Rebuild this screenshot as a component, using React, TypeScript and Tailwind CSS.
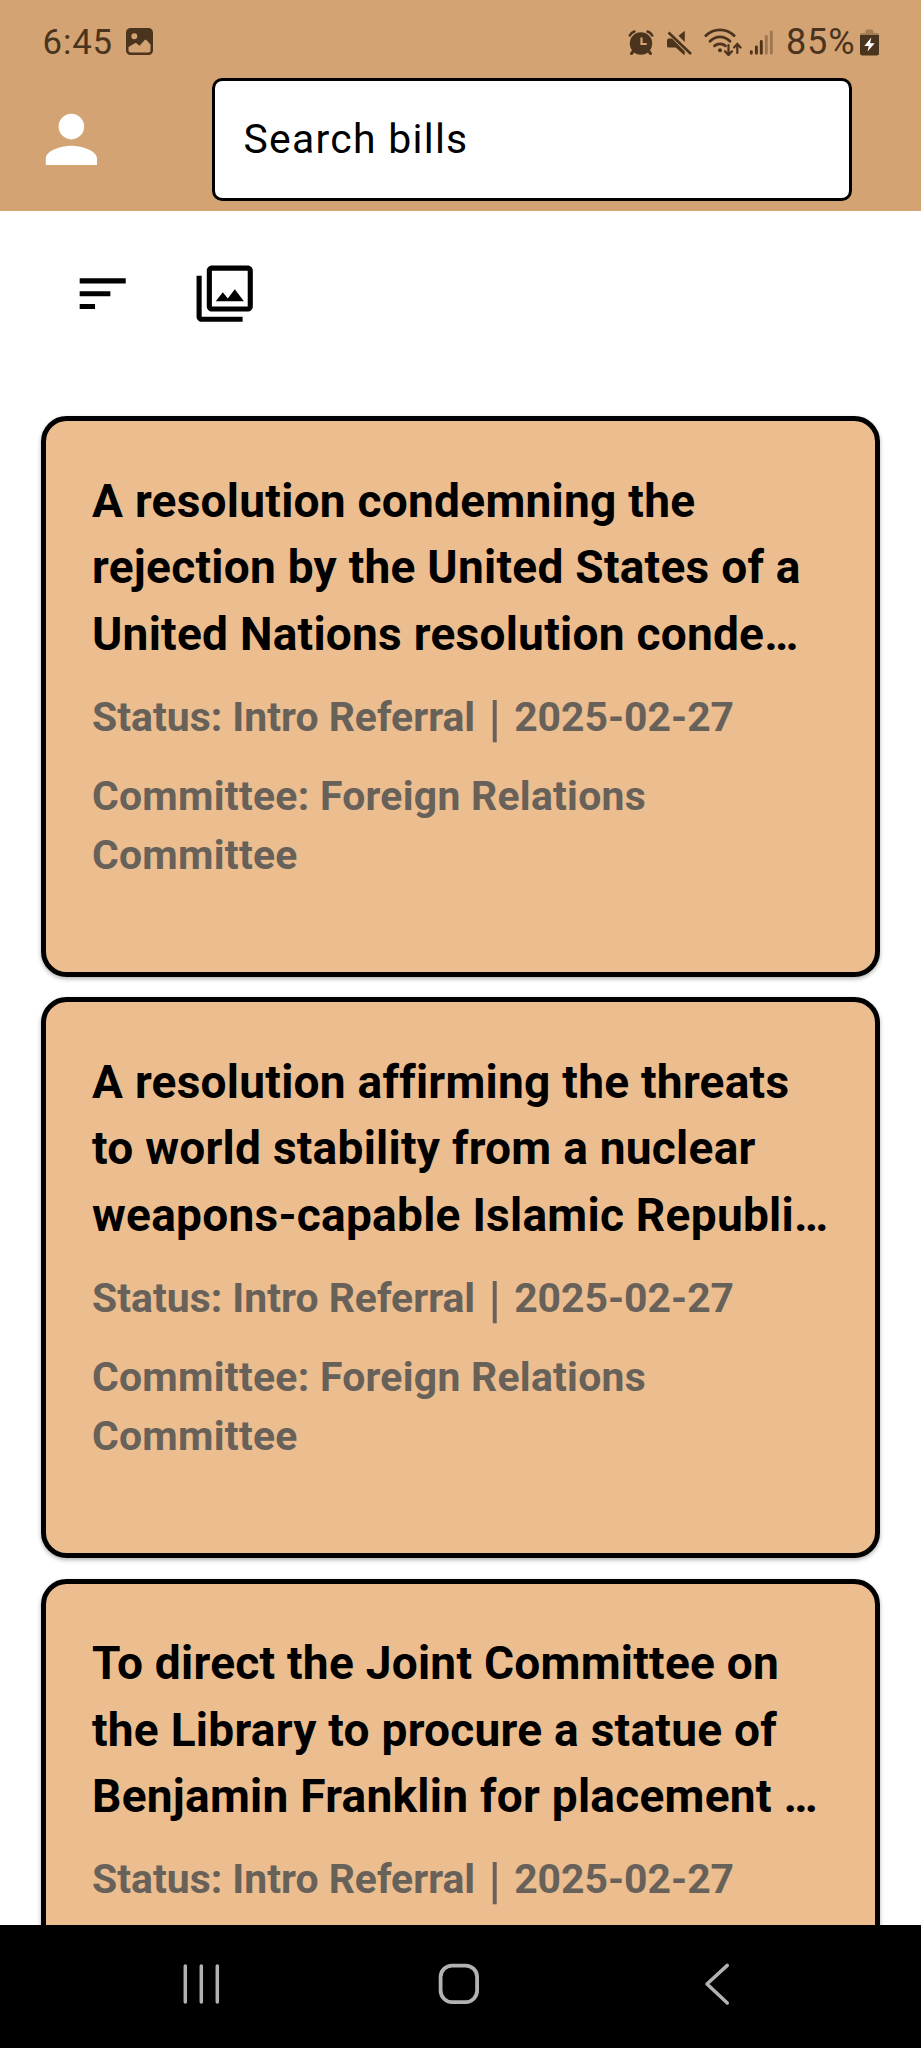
import React from "react";

type Bill = { title: string[]; status: string; date: string; committee: string[] };

const bills: Bill[] = [
  {
    title: [
      "A resolution condemning the",
      "rejection by the United States of a",
      "United Nations resolution conde…",
    ],
    status: "Intro Referral",
    date: "2025-02-27",
    committee: ["Committee: Foreign Relations", "Committee"],
  },
  {
    title: [
      "A resolution affirming the threats",
      "to world stability from a nuclear",
      "weapons-capable Islamic Republi…",
    ],
    status: "Intro Referral",
    date: "2025-02-27",
    committee: ["Committee: Foreign Relations", "Committee"],
  },
  {
    title: [
      "To direct the Joint Committee on",
      "the Library to procure a statue of",
      "Benjamin Franklin for placement …",
    ],
    status: "Intro Referral",
    date: "2025-02-27",
    committee: [],
  },
];

function StatusBar() {
  return (
    <div className="flex h-[78px] items-center justify-between pt-[6px] pr-[42px] pl-[42.5px] text-[34.7px] leading-none text-[#4a341d]">
      <div className="flex items-center">
        <span className="tracking-[0.9px]">6:45</span>
        <svg className="ml-[13px] h-[27px] w-[27px]" viewBox="0 0 27 27">
          <path
            fill="currentColor"
            fillRule="evenodd"
            d="M4.5 0h18A4.5 4.5 0 0 1 27 4.5v18a4.5 4.5 0 0 1-4.5 4.5h-18A4.5 4.5 0 0 1 0 22.500v-18A4.500 4.500 0 0 1 4.500 0zM8.300 5.300a3 3 0 1 0 0 6 3 3 0 0 0 0-6zM2.500 19v3.500a2 2 0 0 0 2 2h18a2 2 0 0 0 2-2V16.500l-4.200-4.500a1 1 0 0 0-1.500 0L13.500 17.800l-3-2.500a1.200 1.200 0 0 0-1.600 0z"
          />
        </svg>
      </div>
      <div className="flex items-center">
        <svg className="h-[28px] w-[160px]" viewBox="626 27 160 28" fill="none" stroke="currentColor">
          <circle cx="640" cy="42.500" r="11.200" fill="currentColor" stroke="none" />
          <path d="M628.800 34.500q1.500-2.800 4.600-3.900M651.200 34.500q-1.500-2.800-4.600-3.900" strokeWidth="2.600" strokeLinecap="round" />
          <path d="M632.500 50l-2 2.500M647.500 50l2 2.500" strokeWidth="3" strokeLinecap="round" />
          <path d="M640.500 36.500v6.500h5.200" stroke="#d4a373" strokeWidth="2.200" />
          <path d="M683.800 29.800v11.300l-6.300-6.300zM667.500 37.500h3.500l12.800 13v3.300h-1l-8-7.300h-7.300q-1.500 0-1.500-1.500v-5.500q0-1.500 1.500-2z" fill="currentColor" stroke="none" />
          <path d="M667.500 31.500l22.500 21.500" strokeWidth="2.600" />
          <g strokeWidth="2.800" strokeLinecap="round">
            <path d="M704.800 34.600Q711 28.900 719 28.900T733.200 34.600" />
            <path d="M709 40.200q4.500-4.300 10-4.300t10 4.300" />
            <path d="M713.500 44.800q2.500-2 5.500-2t5.500 2" />
          </g>
          <circle cx="719" cy="49.300" r="2" fill="currentColor" stroke="none" />
          <path d="M727.500 44v9.500M724 50.300l3.500 3.800 3.500-3.800M736.300 52v-8.500M733 46.500l3.300-3.600 3.300 3.600" strokeWidth="2.200" strokeLinecap="round" />
          <g strokeWidth="2.900" strokeLinecap="round">
            <path d="M750.300 50.800v1.500M755.400 46v6.300M760.300 40.500v11.800" />
            <path d="M765.300 35.500v16.800M770.300 31v21.300" opacity="0.4" />
          </g>
        </svg>
        <span className="-ml-[1.500px] text-[36px] tracking-[0.900px]">85%</span>
        <svg className="ml-[4.500px] h-[27px] w-[19px]" viewBox="0 0 19 27">
          <path d="M5.500 4V2q0-1.500 1.500-1.500h5q1.500 0 1.500 1.500v2H17q2 0 2 2v1.500H0V6q0-2 2-2z" fill="#4a341d" opacity="0.35" />
          <path d="M0 6h19v18q0 2.500-2.500 2.500h-14Q0 26.500 0 24z" fill="#4a341d" />
          <path d="M11.300 8.500L4.300 17h4.500L7.500 22.500l7.200-8.300h-4.600z" fill="#fff" />
        </svg>
      </div>
    </div>
  );
}

function Header() {
  return (
    <header className="h-[211px] shrink-0 bg-[#d4a373]">
      <StatusBar />
      <div className="flex h-[123px] pl-[33.300px]">
        <svg className="mt-[23.200px] h-[76.800px] w-[76.800px] shrink-0" viewBox="0 0 24 24" fill="#fff">
          <path d="M12 12c2.210 0 4-1.790 4-4s-1.790-4-4-4-4 1.790-4 4 1.790 4 4 4zm0 2c-2.670 0-8 1.340-8 4v2h16v-2c0-2.660-5.330-4-8-4z" />
        </svg>
        <div className="ml-[101.900px] flex w-[640px] items-center rounded-[10.200px] border-3 border-black bg-white pl-[28.500px] text-[40.900px] leading-none tracking-[1.280px] text-black">
          Search bills
        </div>
      </div>
    </header>
  );
}

function Toolbar() {
  return (
    <div className="flex h-[205px] shrink-0 gap-[61.600px] pt-[51.500px] pl-[71.500px]">
      <svg className="h-[61.400px] w-[61.400px]" viewBox="0 0 24 24">
        <path d="M3 18h6v-2H3v2zM3 6v2h18V6H3zm0 7h12v-2H3v2z" />
      </svg>
      <svg className="h-[61.400px] w-[61.400px]" viewBox="0 0 24 24">
        <path d="M15.960 10.290l-2.750 3.540-1.960-2.360L8.500 15h11l-3.540-4.710zM3 5H1v16c0 1.100.9 2 2 2h16v-2H3V5zm18-4H7c-1.100 0-2 .9-2 2v14c0 1.100.9 2 2 2h14c1.100 0 2-.9 2-2V3c0-1.100-.9-2-2-2zm0 16H7V3h14v14z" />
      </svg>
    </div>
  );
}

function BillCard({ bill }: { bill: Bill }) {
  return (
    <article className="h-[560.700px] shrink-0 rounded-[25.600px] border-5 border-black bg-[#ebbd8f] pt-[46.500px] pl-[46px] whitespace-nowrap shadow-[0_2px_4px_rgba(0,0,0,0.3)]">
      <h2 className="text-[46.050px] leading-[66.500px] font-bold tracking-[0.250px] text-black">
        {bill.title.map((line) => (
          <span key={line} className="block">{line}</span>
        ))}
      </h2>
      <div className="mt-[20.500px] flex flex-col gap-[20.500px] text-[40.900px] leading-[58.800px] font-bold text-[#67615a]">
        <p className="flex">
          <span>Status: {bill.status}</span>
          <span className="w-[39px] pt-[4px] text-center text-[50px] leading-[54.800px] font-medium">|</span>
          <span>{bill.date}</span>
        </p>
        {bill.committee.length > 0 && (
          <p className="tracking-[0.260px]">
            {bill.committee.map((line) => (
              <span key={line} className="block">{line}</span>
            ))}
          </p>
        )}
      </div>
    </article>
  );
}

function NavigationBar() {
  return (
    <nav className="flex h-[123px] shrink-0 items-start bg-black pt-[37px] pl-[181px]">
      <svg className="h-[44px] w-[40px]" viewBox="0 0 40 44" stroke="#b2b2b2" strokeWidth="3.500" strokeLinecap="round">
        <path d="M4.300 4v36M20.300 4v36M36.300 4v36" />
      </svg>
      <svg className="ml-[215.500px] h-[44px] w-[44px]" viewBox="0 0 44 44" fill="none" stroke="#b2b2b2" strokeWidth="3.800">
        <rect x="3.600" y="3.600" width="36.500" height="36.500" rx="11.500" />
      </svg>
      <svg className="ml-[222.500px] h-[44px] w-[28px]" viewBox="0 0 28 44" fill="none" stroke="#b2b2b2" strokeWidth="3.500" strokeLinecap="round" strokeLinejoin="round">
        <path d="M24.300 3.400L4 22l20.300 19" />
      </svg>
    </nav>
  );
}

export default function App() {
  return (
    <div className="flex h-[2048px] w-[921px] flex-col overflow-hidden bg-white font-['Roboto',sans-serif]">
      <Header />
      <div className="flex min-h-0 flex-1 flex-col overflow-hidden">
        <Toolbar />
        <main className="flex flex-col gap-[20.600px] px-[41px]">
          {bills.map((bill) => (
            <BillCard key={bill.title[0]} bill={bill} />
          ))}
        </main>
      </div>
      <NavigationBar />
    </div>
  );
}
